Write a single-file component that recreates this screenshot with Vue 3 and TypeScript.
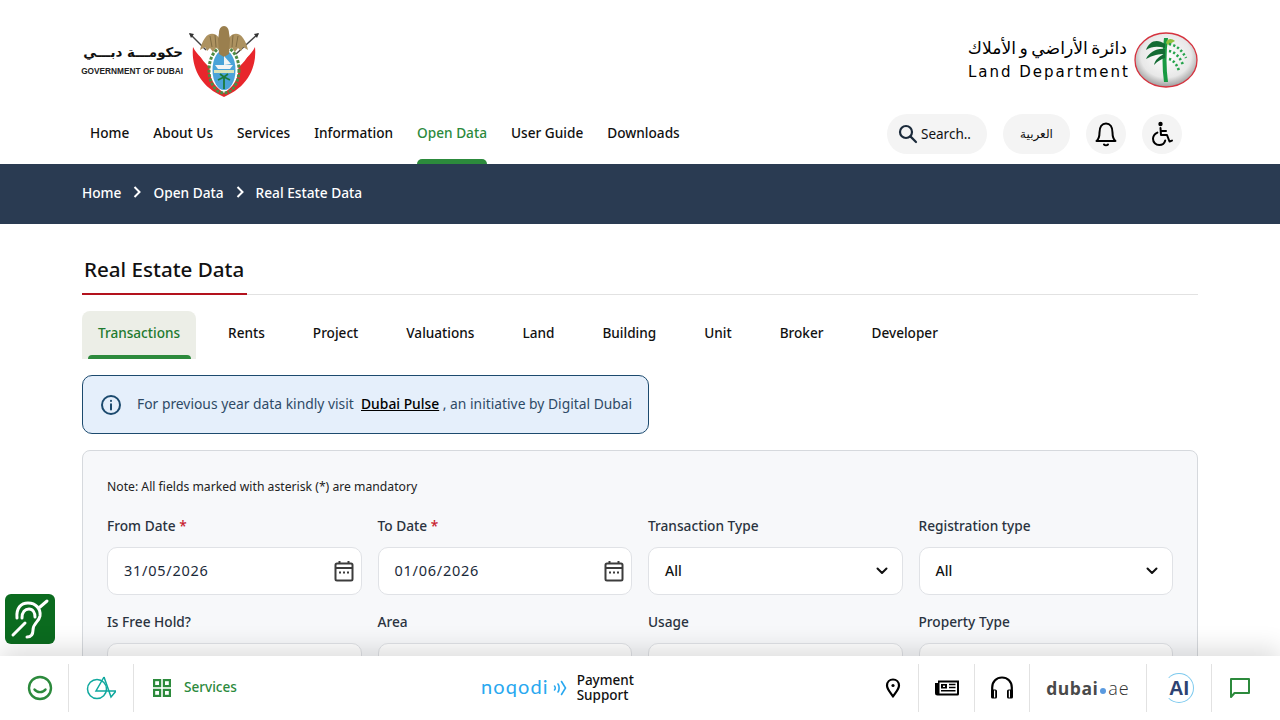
<script setup lang="ts">
const navItems = ['Home', 'About Us', 'Services', 'Information', 'Open Data', 'User Guide', 'Downloads']
const tabs = ['Transactions', 'Rents', 'Project', 'Valuations', 'Land', 'Building', 'Unit', 'Broker', 'Developer']
const fields = [
  { label: 'From Date', req: true, value: '31/05/2026', kind: 'date' },
  { label: 'To Date', req: true, value: '01/06/2026', kind: 'date' },
  { label: 'Transaction Type', req: false, value: 'All', kind: 'select' },
  { label: 'Registration type', req: false, value: 'All', kind: 'select' },
  { label: 'Is Free Hold?', req: false, value: '', kind: 'select' },
  { label: 'Area', req: false, value: '', kind: 'select' },
  { label: 'Usage', req: false, value: '', kind: 'select' },
  { label: 'Property Type', req: false, value: '', kind: 'select' },
]
</script>

<template>
  <div class="page">
    <header class="header">
      <div class="logos">
        <div class="gov">
          <div class="gov-text">
            <span class="gov-ar">حكومـــة دبـــي</span>
            <span class="gov-en">GOVERNMENT OF DUBAI</span>
          </div>
          <svg class="crest" width="74" height="74" viewBox="0 0 74 74">
            <path d="M5 22 C3 42 12 62 36 72 C60 62 69 42 67 22 C63 30 56 36 50 38 L22 38 C16 36 9 30 5 22 Z" fill="#e8262c" />
            <path d="M9 24 C14 30 19 34 24 36 L24 44 C18 40 12 33 9 24 Z M63 24 C58 30 53 34 48 36 L48 44 C54 40 60 33 63 24 Z" fill="#fff" />
            <path d="M2 9 L18 25" stroke="#444" stroke-width="1.4" />
            <path d="M70 9 L48 29" stroke="#444" stroke-width="1.4" />
            <path d="M1 8 L6 9 L3 13 Z M71 8 L66 9 L69 13 Z" fill="#333" />
            <path d="M24 34 C19 44 21 58 36 68 C51 58 53 44 48 34 Z" fill="#fff" />
            <ellipse cx="36" cy="45" rx="15" ry="23" fill="none" stroke="#4d8c43" stroke-width="3" stroke-dasharray="3 1.4" />
            <ellipse cx="36" cy="45" rx="11.5" ry="20" fill="#4aa3d8" />
            <path d="M31 13 C28 8 21 7 17 13 C14 17 13 21 12 25 L17 22 L19 26 L22 23 L25 27 L28 23 L31 24 Z" fill="#ad9260" />
            <path d="M41 13 C44 8 51 7 55 13 C58 17 59 21 60 25 L55 22 L53 26 L50 23 L47 27 L44 23 L41 24 Z" fill="#ad9260" />
            <path d="M31 8 C31 4 33 1 36 1 C39 1 41 4 41 8 L42 14 L41 29 L36 32 L31 29 L30 14 Z" fill="#9a7f4e" />
            <path d="M22 11 L24 22 M27 10 L28 22 M50 11 L48 22 M45 10 L44 22" stroke="#7c683f" stroke-width="0.9" />
            <path d="M27 40 L45 40 L42 44 L30 44 Z" fill="#f4f4f4" />
            <path d="M36 31 L36 40 L43 39 Z" fill="#f4f4f4" />
            <rect x="26" y="45" width="20" height="3" fill="#d9e3b8" />
            <path d="M36 64 L36 53 M36 52 L30 55 M36 52 L42 55 M36 52 L32 49 M36 52 L40 49" stroke="#1c7a3a" stroke-width="1.8" />
          </svg>
        </div>
        <div class="dld">
          <div class="dld-text">
            <span class="dld-ar">دائرة الأراضي و الأملاك</span>
            <span class="dld-en">Land Department</span>
          </div>
          <svg width="64" height="56" viewBox="0 0 64 56">
            <defs>
              <radialGradient id="globe" cx="50%" cy="42%" r="58%">
                <stop offset="0%" stop-color="#ffffff" />
                <stop offset="70%" stop-color="#e8e8e8" />
                <stop offset="100%" stop-color="#9d9d9d" />
              </radialGradient>
            </defs>
            <ellipse cx="32" cy="28" rx="31" ry="27" fill="url(#globe)" stroke="#d6333f" stroke-width="1.3" />
            <path d="M30 6 C28 20 28 36 30 50 L34 50 C32 36 32 20 34 6 Z" fill="#189a42" />
            <path d="M31 12 C23 6 15 9 12 18 C18 14 24 14 31 16 Z M31 17 C22 16 15 21 12 27 C19 23 25 22 31 22 Z M31 22 C25 24 21 28 20 33 C24 29 27 27 31 26 Z" fill="#136b33" />
            <path d="M32 11 C33 6 38 6 41 9 L34 13 Z" fill="#8fc03e" />
            <path d="M35 12 C42 13 48 18 52 26 M35 19 C41 20 46 25 49 33 M35 27 C39 28 43 32 45 39" stroke="#24a34b" stroke-width="2.6" stroke-dasharray="2.2 2.2" fill="none" />
          </svg>
        </div>
      </div>
      <div class="navrow">
        <nav class="nav">
          <a v-for="n in navItems" :key="n" class="nav-item" :class="{ on: n === 'Open Data' }">{{ n }}</a>
        </nav>
        <div class="tools">
          <div class="pill search">
            <svg width="20" height="20" viewBox="0 0 20 20" fill="none" stroke="#1b2a3a" stroke-width="2.2" stroke-linecap="round">
              <circle cx="8" cy="8" r="6" /><path d="M12.4 12.4 L18 18" />
            </svg>
            <span>Search..</span>
          </div>
          <div class="pill lang">العربية</div>
          <div class="round">
            <svg width="24" height="26" viewBox="0 0 24 26" fill="none" stroke="#000" stroke-width="2" stroke-linecap="round" stroke-linejoin="round">
              <path d="M2.5 20 C5 18 5.5 15.5 5.5 11.5 C5.5 6 8 2.5 12 2.5 C16 2.5 18.5 6 18.5 11.5 C18.5 15.5 19 18 21.5 20 Z" />
              <path d="M10 23.5 C11 24.5 13 24.5 14 23.5" />
            </svg>
          </div>
          <div class="round">
            <svg width="24" height="26" viewBox="0 0 24 26" fill="none" stroke="#000" stroke-width="2" stroke-linecap="round" stroke-linejoin="round">
              <circle cx="10.5" cy="3" r="2.2" fill="#000" stroke="none" />
              <path d="M10.5 7 L11 14 L17 14 L19.5 20.5 L22 19.6" />
              <path d="M11 10 L16 10" />
              <path d="M7.4 11.6 C4.6 13 3 15.2 3 17.8 C3 21.2 5.8 24 9.2 24 C12 24 14.5 22.2 15.2 19.4" />
            </svg>
          </div>
        </div>
      </div>
    </header>

    <div class="crumbs">
      <span>Home</span>
      <svg width="8" height="12" viewBox="0 0 8 12" fill="none" stroke="#fff" stroke-width="2"><path d="M1.5 1 L6.5 6 L1.5 11" /></svg>
      <span>Open Data</span>
      <svg width="8" height="12" viewBox="0 0 8 12" fill="none" stroke="#fff" stroke-width="2"><path d="M1.5 1 L6.5 6 L1.5 11" /></svg>
      <span>Real Estate Data</span>
    </div>

    <main class="main">
      <div class="title-row"><h1 class="title">Real Estate Data</h1></div>
      <div class="tabs">
        <div v-for="(t, i) in tabs" :key="t" class="tab" :class="{ active: i === 0 }">{{ t }}</div>
      </div>
      <div class="notice">
        <svg width="22" height="22" viewBox="0 0 22 22" fill="none" stroke="#1c4a6e" stroke-width="2" stroke-linecap="round">
          <circle cx="11" cy="11" r="9" /><path d="M11 10.2 L11 15.5" /><path d="M11 6.8 L11 7" />
        </svg>
        <span class="notice-text">For previous year data kindly visit&nbsp; <a class="link">Dubai Pulse</a> , an initiative by Digital Dubai</span>
      </div>
      <section class="panel">
        <p class="note">Note: All fields marked with asterisk (*) are mandatory</p>
        <div class="grid">
          <div v-for="f in fields" :key="f.label" class="field">
            <label class="lab">{{ f.label }} <em v-if="f.req" class="req">*</em></label>
            <div class="control">
              <span :class="f.kind === 'date' ? 'val-date' : 'val-sel'">{{ f.value }}</span>
              <svg v-if="f.kind === 'date'" class="cal" width="20" height="22" viewBox="0 0 20 22" fill="none" stroke="#3c3c3c" stroke-width="2">
                <rect x="1.5" y="3.5" width="17" height="17" rx="1.5" />
                <path d="M1.5 8 L18.5 8 M5.5 1 L5.5 4 M14.5 1 L14.5 4" />
                <path d="M5 12.5 L7 12.5 M9 12.5 L11 12.5 M13 12.5 L15 12.5" />
              </svg>
              <svg v-else width="12" height="8" viewBox="0 0 12 8" fill="none" stroke="#111" stroke-width="2" stroke-linecap="round" stroke-linejoin="round">
                <path d="M1.5 1.5 L6 6 L10.5 1.5" />
              </svg>
            </div>
          </div>
        </div>
      </section>
    </main>

    <div class="ear">
      <svg width="50" height="50" viewBox="0 0 50 50" fill="none" stroke="#fff" stroke-width="3" stroke-linecap="round" stroke-linejoin="round">
        <path d="M42 7 L35 13" />
        <path d="M20 29 L8 41" />
        <path d="M12 24 C11 14 16 9 23 9 C31 9 36 15 35 22 C34 28 28 29 28 36 C28 41 26 43 22 43" />
        <path d="M17 24 C17 18 20 15 24 15 C28 15 30 19 30 23" />
      </svg>
    </div>

    <footer class="bar">
      <div class="bar-left">
        <div class="cell c1">
          <svg width="26" height="26" viewBox="0 0 26 26" fill="none" stroke="#2c8a3c" stroke-width="2.4" stroke-linecap="round">
            <circle cx="13" cy="13" r="11" /><path d="M7.5 14.5 C10 18 16 18 18.5 14.5" />
          </svg>
        </div>
        <div class="cell c2">
          <svg width="30" height="28" viewBox="0 0 30 28" fill="none" stroke="#0fa89e" stroke-width="1.5">
            <circle cx="11" cy="15" r="9.5" /><path d="M18 3 L10 17 L30 17 L25 23 L18 3" />
          </svg>
        </div>
        <div class="cell c3">
          <svg width="18" height="18" viewBox="0 0 18 18" fill="none" stroke="#2c8a3c" stroke-width="2.2">
            <rect x="1.1" y="1.1" width="6" height="6" /><rect x="10.9" y="1.1" width="6" height="6" />
            <rect x="1.1" y="10.9" width="6" height="6" /><rect x="10.9" y="10.9" width="6" height="6" />
          </svg>
          <span class="svc">Services</span>
        </div>
      </div>
      <div class="bar-mid">
        <span class="noqodi">noqodi</span>
        <svg width="14" height="16" viewBox="0 0 14 16" fill="none" stroke="#29a8f0" stroke-width="1.6" stroke-linecap="round">
          <path d="M1.5 6 C2.5 7 2.5 9 1.5 10 M5 4 C6.5 6 6.5 10 5 12 M8.5 1.5 L12.5 8 L8.5 14.5" />
        </svg>
        <div class="pay"><div class="pay-line">Payment</div><div class="pay-line">Support</div></div>
      </div>
      <div class="bar-right">
        <div class="cell r1">
          <svg width="16" height="20" viewBox="0 0 16 20" fill="none" stroke="#000" stroke-width="2.2">
            <path d="M8 18.5 C5 14 2 11 2 7.5 C2 4 4.6 1.5 8 1.5 C11.4 1.5 14 4 14 7.5 C14 11 11 14 8 18.5 Z" stroke-linejoin="round" />
            <circle cx="8" cy="7.5" r="1.6" fill="#000" stroke="none" />
          </svg>
        </div>
        <div class="cell r2">
          <svg width="24" height="16" viewBox="0 0 24 16">
            <path d="M3 0.5 H24 V14 A1.5 1.5 0 0 1 22.5 15.5 H2.5 A2.5 2.5 0 0 1 0 13 V3 H3 Z" fill="#000" />
            <rect x="4.5" y="2.5" width="17.5" height="11" fill="#fff" />
            <rect x="6" y="4" width="6" height="4.5" fill="#000" />
            <rect x="8" y="5.6" width="2" height="1.4" fill="#fff" />
            <path d="M14 4.5 H20.5 M14 7.5 H20.5 M6 10.8 H20.5" stroke="#000" stroke-width="1.6" />
          </svg>
        </div>
        <div class="cell r3">
          <svg width="24" height="24" viewBox="0 0 24 24">
            <path d="M2.2 15 V11.5 C2.2 5.5 6.5 1.5 12 1.5 C17.5 1.5 21.8 5.5 21.8 11.5 V15" fill="none" stroke="#000" stroke-width="2.2" />
            <rect x="1" y="13.5" width="6" height="9" rx="1.6" fill="#000" /><rect x="17" y="13.5" width="6" height="9" rx="1.6" fill="#000" />
            <rect x="4" y="14.5" width="1.2" height="7" fill="#fff" /><rect x="18.8" y="14.5" width="1.2" height="7" fill="#fff" />
          </svg>
        </div>
        <div class="cell r4">
          <span class="d-a">dubai</span><i class="dot"></i><span class="d-b">ae</span>
        </div>
        <div class="cell r5">
          <div class="ai"><span>AI</span></div>
        </div>
        <div class="cell r6">
          <svg width="22" height="22" viewBox="0 0 22 22" fill="none" stroke="#2c8a3c" stroke-width="2" stroke-linejoin="round">
            <path d="M2 2 H20 V16 H5.5 L2 20 Z" />
          </svg>
        </div>
      </div>
    </footer>
  </div>
</template>

<style>
html, body { margin: 0; overflow: hidden; height: 100%; background: #fff; }
</style>

<style scoped>
.page { font-family: "Noto Sans", "Liberation Sans", sans-serif; color: #111; width: 1280px; height: 720px; overflow: hidden; position: relative; }
.header { height: 164px; box-sizing: border-box; padding: 0 82px; display: flex; flex-direction: column; }
.logos { display: flex; justify-content: space-between; height: 104px; padding-top: 24px; box-sizing: border-box; align-items: flex-start; }
.gov { display: flex; align-items: flex-start; gap: 5px; }
.gov-text { display: flex; flex-direction: column; align-items: flex-end; margin-top: 18px; width: 101px; }
.gov-ar { font-family: "DejaVu Sans", sans-serif; font-size: 13.4px; font-weight: 700; line-height: 22px; text-align: right; white-space: nowrap; color: #111; }
.gov-en { font-family: "Liberation Sans", sans-serif; font-size: 8.3px; font-weight: 700; line-height: 12px; margin-top: 1px; color: #222; white-space: nowrap; }
.crest { display: block; margin-top: 1px; }
.dld { display: flex; align-items: center; gap: 5px; margin-top: 8px; }
.dld-text { display: flex; flex-direction: column; align-items: flex-end; width: 162px; }
.dld-ar { font-family: "DejaVu Sans", sans-serif; font-size: 17.2px; line-height: 24px; word-spacing: -2px; white-space: nowrap; color: #000; margin: -2px 2px 0 0; }
.dld-en { font-family: "DejaVu Sans", sans-serif; font-size: 15px; line-height: 20px; letter-spacing: 2px; white-space: nowrap; color: #000; margin-top: 2px; margin-right: -1px; }
.navrow { display: flex; justify-content: space-between; height: 60px; }
.nav { display: flex; gap: 24px; padding-left: 8px; }
.nav-item { position: relative; font-size: 13.65px; font-weight: 500; line-height: 58px; height: 60px; color: #111; white-space: nowrap; }
.nav-item.on { color: #2c8a3c; }
.nav-item.on::after { content: ""; position: absolute; left: 0; right: 0; bottom: 0; height: 5px; background: #2c8a3c; border-radius: 5px 5px 0 0; }
.tools { display: flex; gap: 16px; align-items: flex-start; margin-top: 10px; padding-right: 16px; }
.pill, .round { height: 40px; background: #f4f4f4; border-radius: 20px; display: flex; align-items: center; justify-content: center; box-sizing: border-box; }
.search { width: 100px; gap: 3px; font-size: 13.5px; color: #111; padding-right: 5px; line-height: 18px; }
.lang { width: 67px; font-family: "DejaVu Sans", sans-serif; font-size: 12px; }
.round { width: 40px; }
.crumbs { height: 60px; box-sizing: border-box; padding: 0 82px 4px; background: #2a3b52; color: #fff; display: flex; align-items: center; gap: 12px; font-size: 13.7px; font-weight: 500; }
.main { padding: 0 82px; }
.title-row { height: 71px; border-bottom: 1px solid #e2e2e2; box-sizing: border-box; }
.title { margin: 0; display: block; height: 71px; box-sizing: border-box; padding: 29px 0 0 2px; width: 165px; font-size: 20.6px; font-weight: 500; line-height: 32px; color: #111; border-bottom: 2px solid #b3121d; white-space: nowrap; }
.tabs { display: flex; gap: 16px; margin-top: 16px; }
.tab { position: relative; height: 48px; padding: 0 16px; font-size: 13.6px; font-weight: 500; line-height: 44px; color: #111; white-space: nowrap; }
.tab.active { background: #eceee7; color: #1f7a30; border-radius: 8px 8px 0 0; }
.tab.active::after { content: ""; position: absolute; left: 6px; right: 5px; bottom: 0; height: 4px; background: #2c8a3c; border-radius: 4px 4px 0 0; }
.notice { margin-top: 16px; width: 567px; height: 59px; box-sizing: border-box; border: 1px solid #1c4a6e; border-radius: 10px; background: #e5effb; display: flex; align-items: center; gap: 15px; padding-left: 17px; }
.notice-text { font-size: 13.85px; color: #2e4a66; white-space: nowrap; line-height: 18px; margin-bottom: 2px; }
.link { color: #000; font-weight: 500; text-decoration: underline; }
.panel { margin-top: 16px; height: 300px; box-sizing: border-box; background: #f7f8fa; border: 1px solid #d6d9dd; border-radius: 8px; padding: 27px 24px 0 24px; }
.note { margin: 0; font-size: 12.2px; line-height: 18px; color: #222; }
.grid { display: grid; grid-template-columns: repeat(4, 1fr); column-gap: 16px; row-gap: 17px; margin-top: 20px; }
.field { display: flex; flex-direction: column; }
.lab { font-size: 13.7px; font-weight: 500; line-height: 20px; color: #2a3340; height: 31px; }
.req { color: #c8202d; font-style: normal; }
.control { height: 48px; background: #fff; border: 1px solid #e0e2e6; border-radius: 10px; box-sizing: border-box; display: flex; align-items: center; justify-content: space-between; padding: 0 14px 0 16px; }
.val-date { font-size: 14.5px; letter-spacing: 0.75px; color: #1b2a3a; margin-bottom: 3px; }
.val-sel { font-size: 14px; font-weight: 500; color: #111; margin-bottom: 1px; }
.cal { margin-right: -7px; }
.ear { position: absolute; left: 5px; top: 594px; width: 50px; height: 50px; background: #0b6b1f; border-radius: 6px; }
.ear svg { display: block; }
.bar { position: absolute; left: 0; right: 0; bottom: 0; height: 64px; background: #fff; box-shadow: 0 -8px 24px rgba(0,0,0,.13); display: flex; align-items: center; justify-content: space-between; }
.bar-left, .bar-right { display: flex; align-items: center; height: 48px; }
.cell { height: 48px; display: flex; align-items: center; justify-content: center; box-sizing: border-box; border-right: 1px solid #e2e2e2; }
.c1 { width: 69px; padding-left: 11px; }
.c2 { width: 65px; }
.c3 { border-right: 0; padding-left: 19px; gap: 13px; }
.svc { font-size: 13.6px; color: #2c8a3c; font-weight: 500; line-height: 18px; margin-bottom: 2px; }
.bar-mid { position: absolute; left: 481px; top: 0; height: 64px; display: flex; align-items: center; }
.noqodi { font-family: "Lato", sans-serif; font-size: 20px; font-weight: 400; color: #29a8f0; letter-spacing: 1.1px; margin-right: 4px; margin-bottom: 5px; }
.pay { margin-left: 10px; }
.pay-line { font-size: 13.5px; line-height: 15px; height: 15px; color: #111; font-weight: 500; }
.r1 { width: 59px; padding-left: 7px; }
.r2 { width: 56px; }
.r3 { width: 55px; }
.r4 { width: 117px; gap: 2px; }
.d-a { font-family: "Open Sans", sans-serif; font-weight: 700; font-size: 17.5px; color: #4a4a4a; letter-spacing: 0.5px; }
.dot { width: 6px; height: 6px; background: #5a9ae0; border-radius: 50%; margin-top: 5px; }
.d-b { font-family: "Open Sans", sans-serif; font-size: 18px; font-weight: 300; color: #333; letter-spacing: 1px; }
.r5 { width: 65px; }
.ai { width: 30px; height: 30px; border-radius: 50%; border: 1px solid #7cc9ee; border-left-color: transparent; box-sizing: border-box; display: flex; align-items: center; justify-content: center; font-family: "Liberation Sans", sans-serif; font-weight: 700; font-size: 20px; color: #2d4272; }
.r6 { width: 68px; border-right: 0; padding-right: 13px; }
</style>
